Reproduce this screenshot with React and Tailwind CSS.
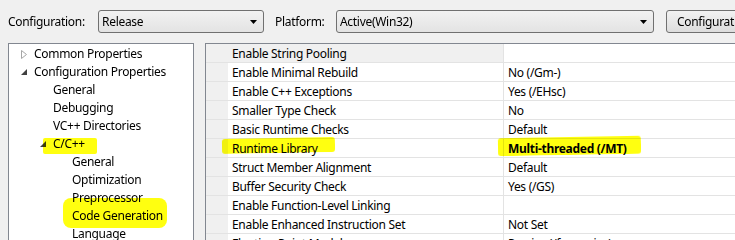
const font = { fontFamily: '"Noto Sans", "Open Sans", sans-serif' }

const tree = [
  { label: 'Common Properties', level: 0, arrow: 'closed' },
  { label: 'Configuration Properties', level: 0, arrow: 'open' },
  { label: 'General', level: 1 },
  { label: 'Debugging', level: 1 },
  { label: 'VC++ Directories', level: 1 },
  { label: 'C/C++', level: 1, arrow: 'open' },
  { label: 'General', level: 2 },
  { label: 'Optimization', level: 2 },
  { label: 'Preprocessor', level: 2 },
  { label: 'Code Generation', level: 2 },
  { label: 'Language', level: 2 },
]

const props = [
  ['Enable String Pooling', '', 'head'],
  ['Enable Minimal Rebuild', 'No (/Gm-)'],
  ['Enable C++ Exceptions', 'Yes (/EHsc)'],
  ['Smaller Type Check', 'No'],
  ['Basic Runtime Checks', 'Default'],
  ['Runtime Library', 'Multi-threaded (/MT)', 'bold'],
  ['Struct Member Alignment', 'Default'],
  ['Buffer Security Check', 'Yes (/GS)'],
  ['Enable Function-Level Linking', ''],
  ['Enable Enhanced Instruction Set', 'Not Set'],
  ['Floating Point Model', 'Precise (/fp:precise)'],
]

function Arrow({ type }) {
  if (type === 'closed')
    return (
      <svg width="6" height="9" viewBox="0 0 6 9">
        <path d="M0.5 0.5 L5.5 4.5 L0.5 8.5 Z" fill="white" stroke="#a6a6a6" />
      </svg>
    )
  return (
    <svg width="6" height="6" viewBox="0 0 6 6">
      <path d="M6 0 L6 6 L0 6 Z" fill="#404040" />
    </svg>
  )
}

function Combo({ text, className }) {
  return (
    <div className={`flex shrink-0 items-center justify-between h-[23px] rounded-[3px] border border-[#707070] bg-gradient-to-b from-[#f2f2f2] to-[#e3e3e3] pl-[3px] pr-[6px] ${className}`}>
      <span>{text}</span>
      <svg width="7" height="4" viewBox="0 0 7 4"><path d="M0 0 L7 0 L3.5 4 Z" fill="#000" /></svg>
    </div>
  )
}

export default function App() {
  return (
    <div className="relative w-[735px] h-[240px] overflow-hidden bg-[#f0f0f0] text-[12px] tracking-[-0.3px] text-black" style={font}>
      <div className="flex items-center h-[23px] mt-[10px]">
        <span className="ml-[8px] w-[90px] shrink-0">Configuration:</span>
        <Combo text="Release" className="w-[166px]" />
        <span className="ml-[11px] w-[61px] shrink-0">Platform:</span>
        <Combo text="Active(Win32)" className="w-[318px]" />
        <div className="ml-[12px] h-[23px] w-[120px] shrink-0 rounded-[3px] border border-[#707070] bg-gradient-to-b from-[#f2f2f2] to-[#dddddd] pl-[10px] flex items-center whitespace-nowrap">
          Configuration Manager...
        </div>
      </div>

      <div className="flex mt-[10px] h-[220px]">
        {/* tree */}
        <div className="relative ml-[8px] w-[186px] shrink-0 border border-[#828790] bg-white pt-[1px]">
          {tree.map((t, i) => (
            <div key={i} className="flex items-center h-[18px]" style={{ paddingLeft: 25 + t.level * 19 }}>
              {t.arrow && (
                <span className="-ml-[13px] w-[13px] flex items-center">
                  <Arrow type={t.arrow} />
                </span>
              )}
              <span className="whitespace-nowrap">{t.label}</span>
            </div>
          ))}
          <div className="absolute left-[34px] top-[94px] w-[54px] h-[16px] bg-[#ffff10] mix-blend-multiply rounded-[2px]" />
          <div className="absolute left-[54px] top-[154px] w-[104px] h-[30px] bg-[#ffff10] mix-blend-multiply rounded-[8px]" />
        </div>

        {/* property grid */}
        <div className="relative ml-[11px] flex-1 border-l border-t border-[#828790] bg-[#f0f0f0]">
          {props.map(([name, value, kind], i) => (
            <div key={i} className="flex h-[19px] border-b border-[#e3e3e3]">
              <div className={`w-[276px] ml-[22px] pl-[4px] pt-[2px] flex items-center whitespace-nowrap border-r border-[#e3e3e3] ${kind === 'head' ? 'bg-[#f0f0f0]' : 'bg-white'}`}>
                {name}
              </div>
              <div className={`flex-1 pl-[4px] pt-[2px] flex items-center whitespace-nowrap bg-white ${kind === 'bold' ? 'font-bold' : ''}`}>
                {value}
              </div>
            </div>
          ))}
          <div className="absolute left-[16px] top-[94px] w-[113px] h-[15px] bg-[#ffff10] mix-blend-multiply rounded-[3px] -rotate-1" />
          <div className="absolute left-[292px] top-[93px] w-[143px] h-[18px] bg-[#ffff10] mix-blend-multiply rounded-[3px] -rotate-1" />
        </div>
      </div>
    </div>
  )
}
